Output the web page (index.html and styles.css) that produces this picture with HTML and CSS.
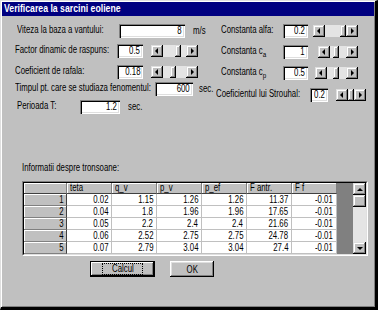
FILE: index.html
```html
<!DOCTYPE html>
<html>
<head>
<meta charset="utf-8">
<link rel="stylesheet" href="styles.css">
</head>
<body>
<div class="window">
  <div class="titlebar"><span class="s sl tb">Verificarea la sarcini eoliene</span></div>
  <div class="form">
    <div class="col col-left">
      <div class="row row-a ml15">
        <span class="lbl w102"><span class="s sl">Viteza la baza a vantului:</span></span>
        <span class="field w66"><span class="s sr">8</span></span>
        <span class="unit g8"><span class="s sl">m/s</span></span>
      </div>
      <div class="row row-b ml13">
        <span class="lbl w102"><span class="s sl">Factor dinamic de raspuns:</span></span>
        <span class="field w26"><span class="s sr">0.5</span></span>
        <div class="hs w47 g8"><span class="ab"><i class="tri tri-l"></i></span><span class="tr"><span class="th" style="margin-left:12px"></span></span><span class="ab"><i class="tri tri-r"></i></span></div>
      </div>
      <div class="row row-c ml13">
        <span class="lbl w102"><span class="s sl">Coeficient de rafala:</span></span>
        <span class="field w26"><span class="s sr">0.18</span></span>
        <div class="hs w47 g8"><span class="ab"><i class="tri tri-l"></i></span><span class="tr"><span class="th" style="margin-left:7px"></span></span><span class="ab"><i class="tri tri-r"></i></span></div>
      </div>
      <div class="row row-d ml13">
        <span class="lbl w140"><span class="s sl">Timpul pt. care se studiaza fenomentul:</span></span>
        <span class="field w38"><span class="s sr">600</span></span>
        <span class="unit g6"><span class="s sl">sec.</span></span>
      </div>
      <div class="row row-e ml15">
        <span class="lbl w63"><span class="s sl">Perioada T:</span></span>
        <span class="field w40"><span class="s sr">1.2</span></span>
        <span class="unit g8"><span class="s sl">sec.</span></span>
      </div>
    </div>
    <div class="col col-right">
      <div class="row row-a ml5">
        <span class="lbl w62"><span class="s sl">Constanta alfa:</span></span>
        <span class="field w25"><span class="s sr">0.2</span></span>
        <div class="hs w45 g5"><span class="ab"><i class="tri tri-l"></i></span><span class="tr tr-end"><span class="th"></span></span><span class="ab"><i class="tri tri-r"></i></span></div>
      </div>
      <div class="row row-rb ml5">
        <span class="lbl w62"><span class="s sl">Constanta c<sub>a</sub></span></span>
        <span class="field w25"><span class="s sr">1</span></span>
        <div class="hs w40 g10"><span class="ab"><i class="tri tri-l"></i></span><span class="tr"><span class="th" style="margin-left:3px"></span></span><span class="ab"><i class="tri tri-r"></i></span></div>
      </div>
      <div class="row row-rc ml5">
        <span class="lbl w62"><span class="s sl">Constanta c<sub>p</sub></span></span>
        <span class="field w25"><span class="s sr">0.5</span></span>
        <div class="hs w43 g7"><span class="ab"><i class="tri tri-l"></i></span><span class="tr"><span class="th" style="margin-left:6px"></span></span><span class="ab"><i class="tri tri-r"></i></span></div>
      </div>
      <div class="row row-rd">
        <span class="lbl w94"><span class="s sl">Coeficientul lui Strouhal:</span></span>
        <span class="field w18"><span class="s sr">0.2</span></span>
        <div class="hs w26 g8"><span class="ab"><i class="tri tri-l"></i></span><span class="tr"><span class="th"></span></span><span class="ab"><i class="tri tri-r"></i></span></div>
      </div>
    </div>
  </div>

  <div class="section-label"><span class="s sl">Informatii despre tronsoane:</span></div>

  <div class="grid">
    <div class="grid-in">
      <div class="cells">
        <div class="hc corner"></div>
        <div class="hc"><span class="s sl">teta</span></div>
        <div class="hc"><span class="s sl">q_v</span></div>
        <div class="hc"><span class="s sl">p_v</span></div>
        <div class="hc"><span class="s sl">p_ef</span></div>
        <div class="hc"><span class="s sl">F antr.</span></div>
        <div class="hc"><span class="s sl">F f</span></div>

        <div class="rh"><span class="s sr">1</span></div>
        <div class="c"><span class="s sr">0.02</span></div><div class="c"><span class="s sr">1.15</span></div><div class="c"><span class="s sr">1.26</span></div><div class="c"><span class="s sr">1.26</span></div><div class="c"><span class="s sr">11.37</span></div><div class="c"><span class="s sr">-0.01</span></div>
        <div class="rh"><span class="s sr">2</span></div>
        <div class="c"><span class="s sr">0.04</span></div><div class="c"><span class="s sr">1.8</span></div><div class="c"><span class="s sr">1.96</span></div><div class="c"><span class="s sr">1.96</span></div><div class="c"><span class="s sr">17.65</span></div><div class="c"><span class="s sr">-0.01</span></div>
        <div class="rh"><span class="s sr">3</span></div>
        <div class="c"><span class="s sr">0.05</span></div><div class="c"><span class="s sr">2.2</span></div><div class="c"><span class="s sr">2.4</span></div><div class="c"><span class="s sr">2.4</span></div><div class="c"><span class="s sr">21.66</span></div><div class="c"><span class="s sr">-0.01</span></div>
        <div class="rh"><span class="s sr">4</span></div>
        <div class="c"><span class="s sr">0.06</span></div><div class="c"><span class="s sr">2.52</span></div><div class="c"><span class="s sr">2.75</span></div><div class="c"><span class="s sr">2.75</span></div><div class="c"><span class="s sr">24.78</span></div><div class="c"><span class="s sr">-0.01</span></div>
        <div class="rh"><span class="s sr">5</span></div>
        <div class="c"><span class="s sr">0.07</span></div><div class="c"><span class="s sr">2.79</span></div><div class="c"><span class="s sr">3.04</span></div><div class="c"><span class="s sr">3.04</span></div><div class="c"><span class="s sr">27.4</span></div><div class="c"><span class="s sr">-0.01</span></div>
      </div>
      <div class="filler"></div>
      <div class="vs">
        <span class="vab"><i class="tri tri-u"></i></span>
        <span class="vth"></span>
        <span class="vtr"></span>
        <span class="vab"><i class="tri tri-d"></i></span>
      </div>
    </div>
  </div>

  <div class="buttons">
    <div class="btn btn-default"><span class="focus"><span class="s sc">Calcul</span></span></div>
    <div class="btn btn-ok"><span class="s sc">OK</span></div>
  </div>
</div>
</body>
</html>
```

FILE: styles.css
```css
* { box-sizing: border-box; }
html, body { margin: 0; padding: 0; background: #000; }
body {
  font-family: "Liberation Sans", Arial, sans-serif;
  font-size: 10px;
  color: #000;
}
/* condensed text, like the narrow dialog font */
.s {
  display: inline-block;
  transform: scaleX(0.78);
  white-space: nowrap;
}
.sl { transform-origin: 0 50%; }
.sr { transform-origin: 100% 50%; }
.sc { transform-origin: 50% 50%; }
.tb { transform: scaleX(0.87); }

.window {
  width: 378px;
  height: 310px;
  background: #c0c0c0;
  border-top: 1px solid #dfdfdf;
  border-left: 1px solid #dfdfdf;
  border-right: 3px solid #000;
  border-bottom: 3px solid #000;
  box-shadow: inset 1px 1px #fff, inset -1px -1px #808080;
  padding: 1px;
  display: flex;
  flex-direction: column;
  overflow: hidden;
}
.titlebar {
  height: 14px;
  background: #000080;
  color: #fff;
  font-weight: bold;
  font-size: 10px;
  line-height: 14px;
  padding-left: 2px;
  white-space: nowrap;
}
.form {
  display: flex;
  padding-top: 8px;
}
.col { display: flex; flex-direction: column; }
.col-left { width: 214px; }
.row {
  display: flex;
  align-items: center;
  height: 14px;
  white-space: nowrap;
}
.row-b { margin-top: 6px; }
.row-c { margin-top: 7px; }
.row-d { margin-top: 3px; }
.row-e { margin-top: 4px; }
.row-rb { margin-top: 7px; }
.row-rc { margin-top: 7px; }
.row-rd { margin-top: 8px; }
.ml15 { margin-left: 15px; }
.ml13 { margin-left: 13px; }
.ml5 { margin-left: 5px; }
.lbl { flex-shrink: 0; line-height: 12px; position: relative; top: -1px; }
.lbl sub { font-size: 8px; vertical-align: -3px; line-height: 0; }
.w102 { width: 102px; }
.w140 { width: 140px; }
.w63 { width: 63px; }
.w62 { width: 62px; }
.w94 { width: 94px; }
.field {
  height: 14px;
  background: #fff;
  text-align: right;
  padding-right: 3px;
  line-height: 14px;
  box-shadow: inset 1px 1px #808080, inset 2px 2px #000, inset -1px -1px #fff, inset -2px -2px #dfdfdf;
  flex-shrink: 0;
}
.w66 { width: 66px; }
.w26 { width: 26px; }
.w25 { width: 25px; }
.w38 { width: 38px; }
.w40 { width: 40px; }
.w18 { width: 18px; }
.w47 { width: 47px; }
.w45 { width: 45px; }
.w43 { width: 43px; }
.w26.hs { width: 26px; }
.g5 { margin-left: 5px; }
.g6 { margin-left: 6px; }
.g7 { margin-left: 7px; }
.g8 { margin-left: 8px; }
.g10 { margin-left: 10px; }
.unit { line-height: 12px; }

/* horizontal scrollbar */
.hs {
  display: flex;
  height: 12px;
  flex-shrink: 0;
}
.ab, .vab, .th, .vth {
  background: #c0c0c0;
  box-shadow: inset -1px -1px #000, inset 1px 1px #dfdfdf, inset -2px -2px #808080, inset 2px 2px #fff;
}
.ab {
  width: 12px;
  height: 12px;
  display: flex;
  align-items: center;
  justify-content: center;
  flex-shrink: 0;
}
.tr {
  flex: 1;
  display: flex;
  background: #e4e4e4;
}
.tr-end { justify-content: flex-end; }
.th { width: 6px; height: 12px; flex-shrink: 0; }
.tri { display: block; width: 0; height: 0; }
.tri-l { border-top: 3px solid transparent; border-bottom: 3px solid transparent; border-right: 3px solid #000; margin-right: 1px; }
.tri-r { border-top: 3px solid transparent; border-bottom: 3px solid transparent; border-left: 3px solid #000; margin-left: 1px; }
.tri-u { border-left: 3px solid transparent; border-right: 3px solid transparent; border-bottom: 3px solid #000; }
.tri-d { border-left: 3px solid transparent; border-right: 3px solid transparent; border-top: 3px solid #000; }

.section-label {
  margin-top: 48px;
  margin-left: 20px;
  line-height: 11px;
  height: 11px;
}

/* grid */
.grid {
  margin-top: 8px;
  margin-left: 20px;
  width: 346px;
  height: 75px;
  border: 1px solid;
  border-color: #808080 #fff #fff #808080;
}
.grid-in {
  height: 100%;
  display: flex;
  border: 1px solid;
  border-color: #000 #dfdfdf #dfdfdf #000;
}
.cells {
  display: grid;
  grid-template-columns: 43px repeat(6, 45px);
  grid-template-rows: 11px repeat(5, 12px);
  width: 313px;
}
.hc {
  background: #c0c0c0;
  box-shadow: inset 1px 1px #fff;
  border-right: 1px solid #808080;
  border-bottom: 1px solid #404040;
  padding-left: 3px;
  line-height: 9px;
  white-space: nowrap;
}
.rh {
  background: #c0c0c0;
  box-shadow: inset 1px 1px #fff;
  border-right: 1px solid #404040;
  border-bottom: 1px solid #808080;
  text-align: right;
  padding-right: 2px;
  line-height: 11px;
}
.c {
  background: #fff;
  border-right: 1px solid #c0c0c0;
  border-bottom: 1px solid #c0c0c0;
  text-align: right;
  padding-right: 3px;
  line-height: 11px;
}
.filler {
  width: 16px;
  background: #808080;
}
.vs {
  width: 13px;
  display: flex;
  flex-direction: column;
}
.vab {
  height: 12px;
  display: flex;
  align-items: center;
  justify-content: center;
}
.vth { height: 12px; }
.vtr { flex: 1; background: #e4e4e4; }

/* buttons */
.buttons {
  display: flex;
  margin-top: 5px;
}
.btn {
  height: 16px;
  background: #c0c0c0;
  box-shadow: inset -1px -1px #000, inset 1px 1px #fff, inset -2px -2px #808080, inset 2px 2px #dfdfdf;
  display: flex;
  align-items: center;
  justify-content: center;
  line-height: 11px;
}
.btn-default {
  margin-left: 88px;
  width: 65px;
  border: 1px solid #000;
  box-shadow: inset -1px -1px #000, inset 1px 1px #fff, inset -2px -2px #808080;
}
.btn-ok {
  margin-left: 15px;
  width: 44px;
}
.focus {
  outline: 1px dotted #000;
  padding: 0 6px;
  line-height: 10px;
  display: flex;
}
```
